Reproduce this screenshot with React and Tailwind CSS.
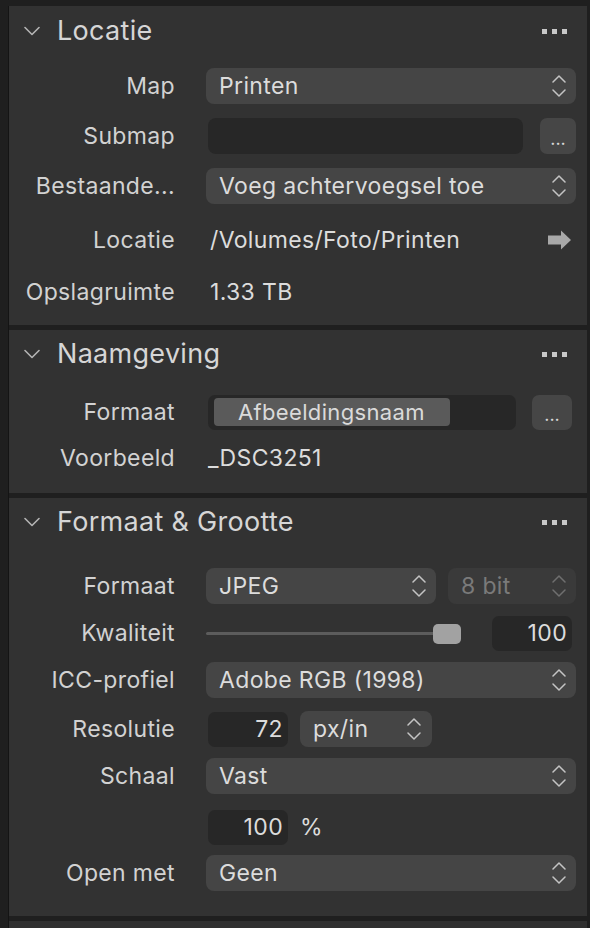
import { Fragment } from 'react'

function UpDown({ dim }) {
  return (
    <svg width="14" height="24" viewBox="0 0 14 24" fill="none" className="shrink-0">
      <path
        d="M1 8 L7 2 L13 8 M1 16 L7 22 L13 16"
        stroke={dim ? '#6f6f6f' : '#c4c4c4'}
        strokeWidth="1.5"
        strokeLinecap="round"
        strokeLinejoin="round"
      />
    </svg>
  )
}

function Popup({ value, className = '', dim }) {
  return (
    <div
      className={`h-[36px] rounded-[8px] flex items-center justify-between pl-[13px] pr-[10px] ${
        dim ? 'bg-[#3a3a3a] text-[#7a7a7a]' : 'bg-[#454545] text-[#dcdcdc]'
      } ${className}`}
    >
      <span>{value}</span>
      <UpDown dim={dim} />
    </div>
  )
}

function Field({ value, className = '' }) {
  return (
    <div
      className={`h-[35px] rounded-[7px] bg-[#272727] flex items-center justify-end pr-[5px] text-[#dcdcdc] ${className}`}
    >
      {value}
    </div>
  )
}

function MoreButton({ className = '' }) {
  return (
    <div
      className={`h-[36px] rounded-[7px] bg-[#464646] flex items-end justify-center pb-[6px] text-[#d8d8d8] text-[18px] leading-none tracking-[0px] ${className}`}
    >
      ...
    </div>
  )
}

function Header({ title, className = '' }) {
  return (
    <div className={`flex items-center pl-[15px] pr-[20px] ${className}`}>
      <svg width="16" height="10" viewBox="0 0 16 10" fill="none" className="shrink-0">
        <path d="M1 1.5 L8 8.5 L15 1.5" stroke="#b4b4b4" strokeWidth="1.6" strokeLinecap="round" strokeLinejoin="round" />
      </svg>
      <span className="ml-[17px] text-[27px] text-[#d6d6d6] tracking-[0.3px]">{title}</span>
      <div className="ml-auto flex gap-[5px]">
        {[0, 1, 2].map((i) => (
          <span key={i} className="w-[5px] h-[5px] bg-[#c8c8c8]" />
        ))}
      </div>
    </div>
  )
}

function Row({ label, className = '', children }) {
  return (
    <div className={`flex items-center pr-[11px] ${className}`}>
      <div className="w-[166px] shrink-0 text-right text-[#d2d2d2] whitespace-nowrap">{label}</div>
      <div className="ml-[31px] flex-1 flex items-center">{children}</div>
    </div>
  )
}

export default function App() {
  return (
    <div className="w-[590px] h-[928px] bg-[#1f1f1f] pt-[6px] pl-[8px] pr-[3px] overflow-hidden font-['Inter',sans-serif] text-[23px] tracking-[0.35px]">
      <div className="border-l border-[#141414] flex flex-col gap-[5px] h-full">
        {/* Locatie */}
        <section className="bg-[#323232] pb-[10px]">
          <Header title="Locatie" className="h-[50px]" />
          <div className="pt-[5px]">
            <Row label="Map" className="h-[50px]">
              <Popup value="Printen" className="flex-1" />
            </Row>
            <Row label="Submap" className="h-[50px]">
              <div className="ml-[2px] h-[36px] flex-1 rounded-[8px] bg-[#272727]" />
              <MoreButton className="ml-[17px] w-[36px]" />
            </Row>
            <Row label="Bestaande..." className="h-[50px]">
              <Popup value="Voeg achtervoegsel toe" className="flex-1" />
            </Row>
            <Row label="Locatie" className="h-[58px]">
              <span className="ml-[4px] text-[#dcdcdc]">/Volumes/Foto/Printen</span>
              <svg width="24" height="20" viewBox="0 0 24 20" className="ml-auto mr-[4px]">
                <path d="M0 5.5 H13 V0.5 L23 10 L13 19.5 V14.5 H0 Z" fill="#a8a8a8" />
              </svg>
            </Row>
            <Row label="Opslagruimte" className="h-[46px]">
              <span className="ml-[4px] text-[#dcdcdc]">1.33 TB</span>
            </Row>
          </div>
        </section>

        {/* Naamgeving */}
        <section className="bg-[#323232] pb-[14px]">
          <Header title="Naamgeving" className="h-[48px]" />
          <div className="pt-[9px]">
            <Row label="Formaat" className="h-[50px] !pr-[15px]">
              <div className="ml-[2px] h-[35px] flex-1 rounded-[7px] bg-[#272727] flex items-center pl-[6px]">
                <div className="h-[28px] w-[236px] rounded-[4px] bg-[#5a5a5a] text-[#dadada] text-[22px] flex items-center pl-[24px]">
                  Afbeeldingsnaam
                </div>
              </div>
              <MoreButton className="ml-[16px] w-[40px] !h-[35px]" />
            </Row>
            <Row label="Voorbeeld" className="h-[42px]">
              <span className="ml-[2px] text-[#dcdcdc]">_DSC3251</span>
            </Row>
          </div>
        </section>

        {/* Formaat & Grootte */}
        <section className="bg-[#323232] pb-[26px]">
          <Header title="Formaat &amp; Grootte" className="h-[48px]" />
          <div className="pt-[15px]">
            <Row label="Formaat" className="h-[50px]">
              <Popup value="JPEG" className="w-[230px]" />
              <Popup value="8 bit" dim className="ml-[12px] flex-1" />
            </Row>
            <Row label="Kwaliteit" className="h-[45px] !pr-[15px]">
              <div className="relative w-[255px] h-[20px] flex items-center">
                <div className="w-full h-[3px] bg-[#5c5c5c] rounded-full" />
                <div className="absolute right-0 top-0 w-[28px] h-[20px] rounded-[5px] bg-[#a2a2a2]" />
              </div>
              <Field value="100" className="ml-auto w-[80px]" />
            </Row>
            <Row label="ICC-profiel" className="h-[48px]">
              <Popup value="Adobe RGB (1998)" className="flex-1" />
            </Row>
            <Row label="Resolutie" className="h-[50px]">
              <Field value="72" className="ml-[2px] w-[80px]" />
              <Popup value="px/in" className="ml-[12px] w-[132px] !pr-[11px]" />
            </Row>
            <Row label="Schaal" className="h-[44px]">
              <Popup value="Vast" className="flex-1" />
            </Row>
            <Row label="" className="h-[58px]">
              <Field value="100" className="ml-[2px] w-[80px]" />
              <span className="ml-[12px] text-[#dcdcdc]">%</span>
            </Row>
            <Row label="Open met" className="h-[34px]">
              <Popup value="Geen" className="flex-1" />
            </Row>
          </div>
        </section>

        <section className="bg-[#303030] flex-1" />
      </div>
    </div>
  )
}
